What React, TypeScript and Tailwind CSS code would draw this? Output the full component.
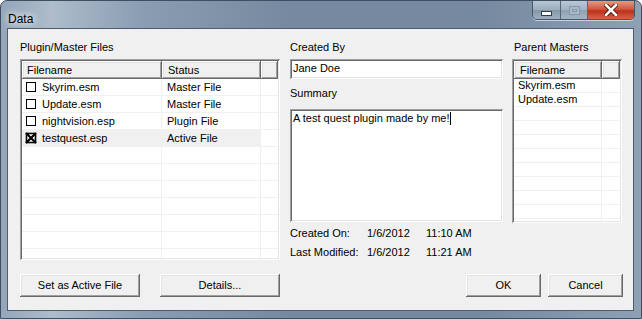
const FONT = { fontFamily: '"Liberation Sans", Arial, sans-serif' }

const raised = 'shadow-[inset_-1px_-1px_#696969,inset_1px_1px_#ffffff,inset_-2px_-2px_#a0a0a0,inset_2px_2px_#e3e3e3]'
const sunken = 'shadow-[inset_1px_1px_#a0a0a0,inset_-1px_-1px_#ffffff,inset_2px_2px_#696969,inset_-2px_-2px_#e3e3e3]'

const plugins = [
  { name: 'Skyrim.esm', status: 'Master File', active: false },
  { name: 'Update.esm', status: 'Master File', active: false },
  { name: 'nightvision.esp', status: 'Plugin File', active: false },
  { name: 'testquest.esp', status: 'Active File', active: true },
]

function CheckBox({ checked }: { checked: boolean }) {
  return (
    <svg width="12" height="12" viewBox="0 0 12 12" className="shrink-0">
      <rect x="1.5" y="1.5" width="9" height="9" fill="white" stroke="black" strokeWidth={checked ? 1.6 : 1} />
      {checked && <path d="M1 1 L11 11 M11 1 L1 11" stroke="black" strokeWidth="2.2" />}
    </svg>
  )
}

function HeaderCell({ w, children, pl = 'pl-[5px]' }: { w: string; children?: React.ReactNode; pl?: string }) {
  return (
    <div className={`${w} h-[18px] flex items-center bg-[#f0f0f0] ${pl} ${raised} shrink-0`}>{children}</div>
  )
}

function Button({ w, children }: { w: string; children: React.ReactNode }) {
  return (
    <button className={`${w} h-[23px] bg-[#f0f0f0] ${raised} text-[11px] text-black flex items-center justify-center`}>
      {children}
    </button>
  )
}

export default function App() {
  const emptyLeft = Array.from({ length: 8 })
  const emptyRight = Array.from({ length: 9 })
  return (
    <div style={FONT} className="w-[642px] h-[319px] flex flex-col rounded-t-[7px] border border-[#3f4f62] bg-[linear-gradient(90deg,#94a6b9_0%,#aebccb_8%,#8a9db2_22%,#7689a0_45%,#7589a0_75%,#8ea0b3_100%)] text-black overflow-hidden">
      {/* title bar */}
      <div className="h-[27px] flex items-start shrink-0">
        <span className="pl-[7px] pt-[11px] text-[12px] leading-[14px] [text-shadow:0_0_6px_#ffffff,0_0_10px_#ffffff]">Data</span>
        <div className="ml-auto mr-[6px] flex h-[19px] rounded-b-[5px] border border-t-0 border-[#45556a] overflow-hidden shadow-[0_1px_0_#c8d3de]">
          <div className="w-[28px] flex items-center justify-center bg-[linear-gradient(180deg,#bac7d4,#9aabbd_50%,#8596a9_51%,#9fafc0)] border-r border-[#56677b]">
            <div className="w-[11px] h-[5px] bg-white border border-[#2f3d4d] mt-[6px]" />
          </div>
          <div className="w-[27px] flex items-center justify-center bg-[linear-gradient(180deg,#bac7d4,#a2b2c3_50%,#8fa0b2_51%,#a5b5c5)] border-r border-[#56677b]">
            <div className="w-[11px] h-[9px] border border-[#8798aa] bg-[#a9b8c7] flex items-center justify-center">
              <div className="w-[5px] h-[3px] border border-[#8798aa]" />
            </div>
          </div>
          <div className="w-[46px] flex items-center justify-center bg-[linear-gradient(180deg,#e39b85,#d0583d_45%,#bd3119_55%,#d4634a)]">
            <svg width="14" height="12" viewBox="0 0 14 12">
              <path d="M2 1 L12 11 M12 1 L2 11" stroke="#4a1308" strokeWidth="4.5" strokeLinecap="square" />
              <path d="M2 1 L12 11 M12 1 L2 11" stroke="#ffffff" strokeWidth="2.6" strokeLinecap="square" />
            </svg>
          </div>
        </div>
      </div>

      {/* client area */}
      <div className="ml-[6px] mr-[7px] mb-[7px] flex-1 border border-[#4c5d71] bg-[#f0f0f0] flex flex-col pt-[12px] text-[11px] leading-[13px]">
        <div className="h-[221px] flex">
          {/* left column */}
          <div className="ml-[12px] w-[260px] flex flex-col">
            <div>Plugin/Master Files</div>
            <div className={`mt-[5px] h-[201px] bg-white ${sunken} p-[2px] overflow-hidden`}>
              <div className="flex">
                <HeaderCell w="w-[140px]">Filename</HeaderCell>
                <HeaderCell w="w-[99px]" pl="pl-[6px]">Status</HeaderCell>
                <HeaderCell w="flex-1" />
              </div>
              {plugins.map(p => (
                <div key={p.name} className="flex h-[17px] border-b border-[#f0f0f0]">
                  <div className={`w-[140px] flex items-center gap-[5px] pl-[3px] border-r border-[#f0f0f0] ${p.active ? 'bg-[#f0f0f0]' : ''}`}>
                    <CheckBox checked={p.active} />
                    <span>{p.name}</span>
                  </div>
                  <div className={`w-[99px] flex items-center pl-[5px] border-r border-[#f0f0f0] ${p.active ? 'bg-[#f0f0f0]' : ''}`}>{p.status}</div>
                  <div className="flex-1" />
                </div>
              ))}
              {emptyLeft.map((_, i) => (
                <div key={i} className="flex h-[17px] border-b border-[#f0f0f0]">
                  <div className="w-[140px] border-r border-[#f0f0f0]" />
                  <div className="w-[99px] border-r border-[#f0f0f0]" />
                  <div className="flex-1" />
                </div>
              ))}
            </div>
          </div>

          {/* middle column */}
          <div className="ml-[10px] w-[213px] flex flex-col">
            <div>Created By</div>
            <div className={`mt-[5px] h-[20px] bg-white ${sunken} flex items-center pl-[3px]`}>Jane Doe</div>
            <div className="mt-[8px]">Summary</div>
            <div className={`mt-[9px] h-[114px] bg-white ${sunken} pl-[3px] pt-[3px] flex items-start`}>
              <span>A test quest plugin made by me!</span>
              <span className="w-px h-[13px] bg-black" />
            </div>
            <div className="mt-[2px] h-[19px] flex items-center">
              <span className="w-[77px]">Created On:</span>
              <span className="w-[59px]">1/6/2012</span>
              <span>11:10 AM</span>
            </div>
            <div className="h-[19px] flex items-center">
              <span className="w-[77px]">Last Modified:</span>
              <span className="w-[59px]">1/6/2012</span>
              <span>11:21 AM</span>
            </div>
          </div>

          {/* right column */}
          <div className="ml-[9px] w-[110px] flex flex-col">
            <div className="pl-[2px]">Parent Masters</div>
            <div className={`mt-[5px] h-[164px] bg-white ${sunken} p-[2px] overflow-hidden`}>
              <div className="flex">
                <HeaderCell w="w-[88px]" pl="pl-[6px]">Filename</HeaderCell>
                <HeaderCell w="flex-1" />
              </div>
              {['Skyrim.esm', 'Update.esm'].map(n => (
                <div key={n} className="flex h-[14px] border-b border-[#f0f0f0]">
                  <div className="w-[88px] flex items-center pl-[4px] border-r border-[#f0f0f0]">{n}</div>
                  <div className="flex-1" />
                </div>
              ))}
              {emptyRight.map((_, i) => (
                <div key={i} className="flex h-[14px] border-b border-[#f0f0f0]">
                  <div className="w-[88px] border-r border-[#f0f0f0]" />
                  <div className="flex-1" />
                </div>
              ))}
            </div>
          </div>
        </div>

        {/* buttons */}
        <div className="mt-[12px] flex">
          <div className="ml-[12px] w-[260px] flex justify-between">
            <Button w="w-[120px]">Set as Active File</Button>
            <Button w="w-[120px]">Details...</Button>
          </div>
          <div className="ml-auto mr-[10px] flex gap-[7px]">
            <Button w="w-[75px]">OK</Button>
            <Button w="w-[75px]">Cancel</Button>
          </div>
        </div>
      </div>
    </div>
  )
}
